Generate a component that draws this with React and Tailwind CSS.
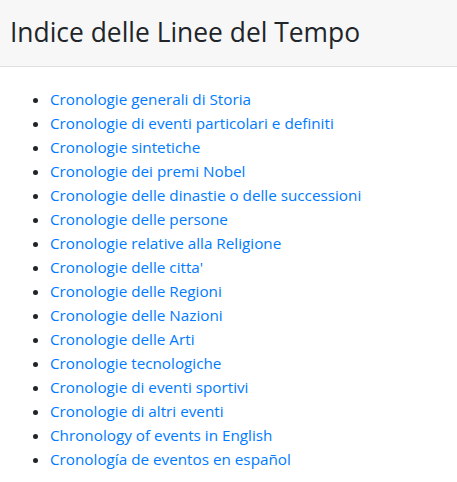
import React from 'react';

const links = [
  'Cronologie generali di Storia',
  'Cronologie di eventi particolari e definiti',
  'Cronologie sintetiche',
  'Cronologie dei premi Nobel',
  'Cronologie delle dinastie o delle successioni',
  'Cronologie delle persone',
  'Cronologie relative alla Religione',
  "Cronologie delle citta'",
  'Cronologie delle Regioni',
  'Cronologie delle Nazioni',
  'Cronologie delle Arti',
  'Cronologie tecnologiche',
  'Cronologie di eventi sportivi',
  'Cronologie di altri eventi',
  'Chronology of events in English',
  'Cronología de eventos en español',
];

const App = () => {
  return (
    <div className="min-h-screen w-full bg-white text-[#212529]" style={{ fontFamily: '"Open Sans", "Noto Sans", sans-serif' }}>
      <div className="h-[67px] px-[10px] bg-[#f7f7f7] border-b border-[#dfdfdf] flex items-center">
        <h3 className="text-[26.4px] leading-[1.2] font-normal">Indice delle Linee del Tempo</h3>
      </div>
      <div className="px-[10px] pt-[20px]">
        <ul className="list-disc pl-[40px]">
          {links.map(l => (
            <li key={l} className="text-[15.25px] leading-[24px]">
              <a href="#" className="text-[#007bff] no-underline">{l}</a>
            </li>
          ))}
        </ul>
      </div>
    </div>
  );
};

export default App;
